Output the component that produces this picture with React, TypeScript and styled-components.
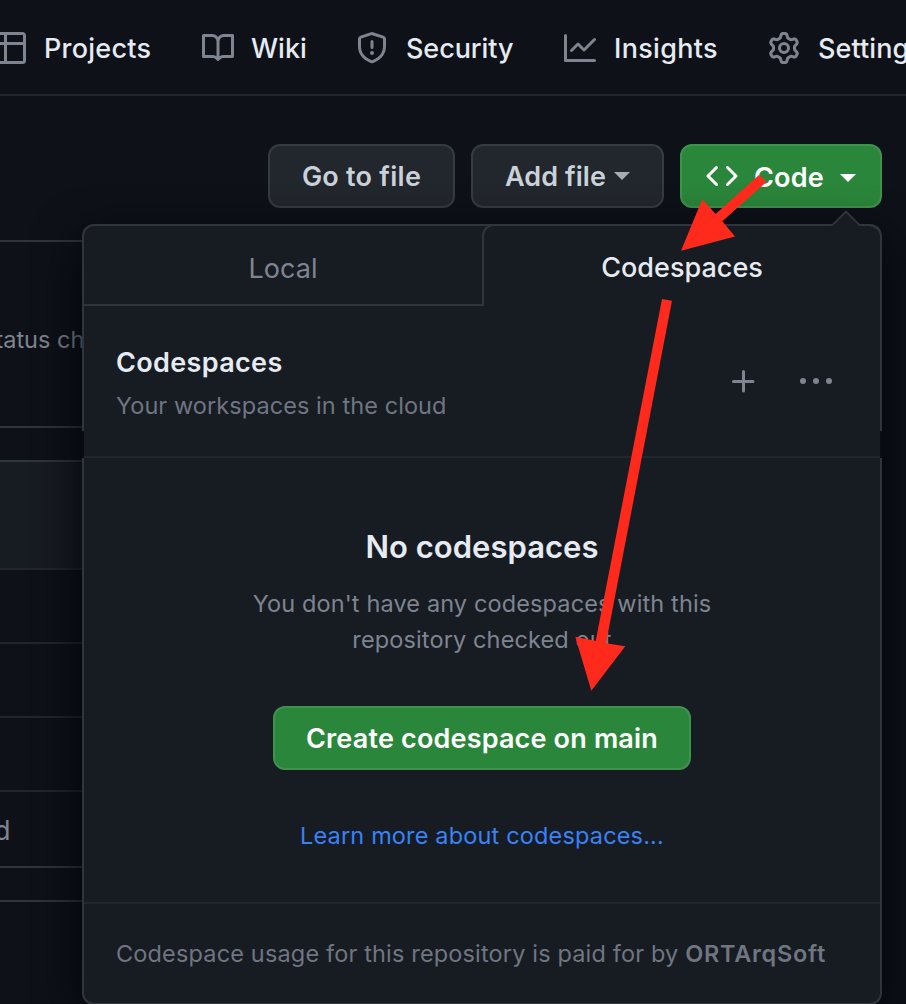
import React from "react";
import styled, { createGlobalStyle } from "styled-components";

const color = {
  canvas: "#0e1118",
  overlay: "#171b22",
  border: "#30353d",
  borderMuted: "#22262d",
  text: "#e6ebf3",
  muted: "#7e8590",
  subtle: "#6f7681",
  green: "#2a863a",
  link: "#3a82f6",
  arrow: "#ff2a1c",
};

const GlobalStyle = createGlobalStyle`
  * { box-sizing: border-box; }
  body {
    margin: 0;
    background: ${color.canvas};
    font-family: Inter, "Liberation Sans", sans-serif;
    color: ${color.text};
  }
`;

const Page = styled.div`
  position: relative;
  width: 906px;
  height: 1004px;
  overflow: hidden;
  background: ${color.canvas};
`;

const Nav = styled.nav`
  display: flex;
  align-items: center;
  gap: 48px;
  height: 96px;
  padding-top: 2px;
  margin-left: -6px;
  border-bottom: 2px solid ${color.borderMuted};
`;

const NavItem = styled.a`
  display: flex;
  flex: none;
  align-items: center;
  gap: 16px;
`;

const NavLabel = styled.span<{ $width: number; $indent: number; $spacing: number }>`
  width: ${(p) => p.$width}px;
  padding-top: 2px;
  padding-left: ${(p) => p.$indent}px;
  font-size: 27px;
  font-weight: 450;
  line-height: 40px;
  letter-spacing: ${(p) => p.$spacing}px;
  white-space: nowrap;
`;

const Octicon = styled.svg<{ $tone?: string }>`
  flex: none;
  display: block;
  fill: ${(p) => p.$tone ?? color.muted};
`;

const Toolbar = styled.div`
  position: relative;
  z-index: 1;
  display: flex;
  justify-content: flex-end;
  gap: 16px;
  padding: 48px 24px 0 0;
`;

const Button = styled.button<{ $width: number; $primary?: boolean; $spacing?: number }>`
  display: flex;
  align-items: center;
  justify-content: center;
  width: ${(p) => p.$width}px;
  height: 64px;
  padding: 0;
  border: 2px solid ${(p) => (p.$primary ? "#3f924e" : "#363b42")};
  border-radius: 12px;
  background: ${(p) => (p.$primary ? color.green : "#22262d")};
  color: ${(p) => (p.$primary ? "#ffffff" : "#c9d1d9")};
  font: 600 27px/40px Inter, "Liberation Sans", sans-serif;
  letter-spacing: ${(p) => p.$spacing ?? 0.2}px;
  white-space: nowrap;
`;

const ButtonLabel = styled.span`
  padding-top: 2px;
`;

const CodeLabel = styled.span`
  margin: 4px 16px 0;
`;

const Caret = styled.span<{ $tone: string }>`
  width: 0;
  height: 0;
  border: 8px solid transparent;
  border-top-color: ${(p) => p.$tone};
  border-bottom-width: 0;
`;

const AddCaret = styled(Caret)`
  margin-left: 8px;
`;

const CodeCaret = styled(Caret)`
  margin-top: 3px;
`;

const Menu = styled.section`
  position: absolute;
  top: 128px;
  right: 24px;
  width: 800px;
  height: 781px;
  border-radius: 12px;
  box-shadow: 0 16px 48px #010409;
`;

const Notch = styled.svg`
  position: absolute;
  top: -14px;
  right: 20px;
`;

const Tabs = styled.div`
  display: flex;
  height: 82px;
  border: 2px solid ${color.border};
  border-bottom: 0;
  border-radius: 12px 12px 0 0;
  background: ${color.overlay};
`;

const Tab = styled.div<{ $active?: boolean }>`
  display: flex;
  align-items: center;
  justify-content: center;
  width: 398px;
  height: ${(p) => (p.$active ? 82 : 80)}px;
  margin-top: ${(p) => (p.$active ? -2 : 0)}px;
  padding-top: ${(p) => (p.$active ? 4 : 8)}px;
  border: 0 solid ${color.border};
  border-width: ${(p) => (p.$active ? "2px 0 0 2px" : "0 0 2px 0")};
  border-top-left-radius: ${(p) => (p.$active ? 12 : 0)}px;
  border-top-right-radius: ${(p) => (p.$active ? 12 : 0)}px;
  color: ${(p) => (p.$active ? color.text : color.muted)};
  font-size: 27px;
  font-weight: ${(p) => (p.$active ? 450 : 400)};
  line-height: 40px;
  letter-spacing: 0.02px;
`;

/* The side borders stop short of the divider, leaving a notch on either edge. */
const ListHeader = styled.header`
  display: flex;
  justify-content: space-between;
  height: 152px;
  padding: 37px 49px 0 34px;
  background:
    linear-gradient(${color.borderMuted}, ${color.borderMuted}) 2px 100% / 796px 2px no-repeat,
    linear-gradient(${color.overlay}, ${color.overlay}) 2px 0 / 796px 100% no-repeat,
    linear-gradient(${color.border}, ${color.border}) 0 0 / 100% 125px no-repeat,
    #0a0c11;
`;

const Heading = styled.h3`
  margin: 0;
  font-size: 27px;
  font-weight: 600;
  line-height: 40px;
  letter-spacing: 0.35px;
`;

const Caption = styled.p`
  margin: 4px 0 0;
  color: ${color.subtle};
  font-size: 23.5px;
  line-height: 37px;
  letter-spacing: 0.07px;
`;

const Actions = styled.div`
  display: flex;
  gap: 44px;
  height: 32px;
  margin-top: 22px;
  align-items: center;
`;

const Blankslate = styled.div`
  display: flex;
  flex-direction: column;
  align-items: center;
  height: 446px;
  padding-top: 65px;
  border: 2px solid ${color.border};
  border-width: 0 2px;
  background:
    linear-gradient(${color.borderMuted}, ${color.borderMuted}) 0 100% / 100% 2px no-repeat,
    ${color.overlay};
`;

const Title = styled.h2`
  margin: 0;
  font-size: 31px;
  font-weight: 600;
  line-height: 48px;
  letter-spacing: 0.02px;
`;

const Message = styled.p`
  width: 480px;
  margin: 15px 0 48px;
  color: ${color.muted};
  font-size: 23.5px;
  line-height: 36px;
  letter-spacing: 0.13px;
  text-align: center;
`;

const Link = styled.a`
  margin-top: 48px;
  color: ${color.link};
  font-size: 23.5px;
  line-height: 36px;
  letter-spacing: 0.16px;
`;

const Footer = styled.footer`
  height: 101px;
  padding: 32px 0 0 32px;
  border: 2px solid ${color.border};
  border-top: 0;
  border-radius: 0 0 12px 12px;
  background: ${color.overlay};
  color: ${color.subtle};
  font-size: 23.5px;
  line-height: 36px;
  letter-spacing: 0.156px;
  white-space: nowrap;
`;

const Owner = styled.strong`
  font-weight: 600;
  letter-spacing: 0.72px;
`;

const Content = styled.main`
  display: flex;
  flex-direction: column;
  gap: 32px;
  width: 882px;
  margin-top: 32px;
`;

const Box = styled.div<{ $height: number }>`
  flex: none;
  height: ${(p) => p.$height}px;
  border: 2px solid ${color.border};
  border-width: 2px 0;
`;

const StatusText = styled.p`
  margin: 80px 0 0 -17px;
  color: ${color.muted};
  font-size: 23.5px;
  line-height: 36px;
`;

const FileRow = styled.div<{ $head?: boolean; $last?: boolean }>`
  display: flex;
  align-items: center;
  height: ${(p) => (p.$head ? 108 : 74)}px;
  padding-top: 4px;
  border-bottom: ${(p) => (p.$last ? 0 : 2)}px solid ${color.borderMuted};
  background: ${(p) => (p.$head ? color.overlay : "transparent")};
`;

const FileText = styled.span`
  margin-left: -6px;
  color: ${color.muted};
  font-size: 27px;
  line-height: 40px;
`;

const Annotations = styled.svg`
  position: absolute;
  inset: 0;
  z-index: 2;
  fill: ${color.arrow};
`;

const icons = {
  table:
    "M0 1.75C0 .784.784 0 1.75 0h12.5C15.216 0 16 .784 16 1.75v12.5A1.75 1.75 0 0 1 14.25 16H1.75A1.75 1.75 0 0 1 0 14.25ZM6.5 6.5v8h7.75a.25.25 0 0 0 .25-.25V6.5Zm8-1.5V1.75a.25.25 0 0 0-.25-.25H6.5V5Zm-13 1.5v7.75c0 .138.112.25.25.25H5v-8ZM5 5V1.5H1.75a.25.25 0 0 0-.25.25V5Z",
  book: "M0 1.75A.75.75 0 0 1 .75 1h4.253c1.227 0 2.317.59 3 1.501A3.743 3.743 0 0 1 11.006 1h4.245a.75.75 0 0 1 .75.75v10.5a.75.75 0 0 1-.75.75h-4.507a2.25 2.25 0 0 0-1.591.659l-.622.621a.75.75 0 0 1-1.06 0l-.622-.621A2.25 2.25 0 0 0 5.258 13H.75a.75.75 0 0 1-.75-.75Zm7.251 10.324.004-5.073-.002-2.253A2.25 2.25 0 0 0 5.003 2.5H1.5v9h3.757a3.75 3.75 0 0 1 1.994.574ZM8.755 4.75l-.004 7.322a3.752 3.752 0 0 1 1.992-.572H14.5v-9h-3.495a2.25 2.25 0 0 0-2.25 2.25Z",
  shield:
    "M7.467.133a1.748 1.748 0 0 1 1.066 0l5.25 1.68A1.75 1.75 0 0 1 15 3.48V7c0 1.566-.32 3.182-1.303 4.682-.983 1.498-2.585 2.813-5.032 3.855a1.697 1.697 0 0 1-1.33 0c-2.447-1.042-4.049-2.357-5.032-3.855C1.32 10.182 1 8.566 1 7V3.48a1.75 1.75 0 0 1 1.217-1.667Zm.61 1.429a.25.25 0 0 0-.153 0l-5.25 1.68a.25.25 0 0 0-.174.238V7c0 1.358.275 2.666 1.057 3.86.784 1.194 2.121 2.34 4.366 3.297a.196.196 0 0 0 .154 0c2.245-.956 3.582-2.104 4.366-3.298C13.225 9.666 13.5 8.36 13.5 7V3.48a.251.251 0 0 0-.174-.237l-5.25-1.68ZM8.75 4.75v3a.75.75 0 0 1-1.5 0v-3a.75.75 0 0 1 1.5 0ZM9 10.5a1 1 0 1 1-2 0 1 1 0 0 1 2 0Z",
  graph:
    "M1.5 1.75V13.5h13.75a.75.75 0 0 1 0 1.5H.75a.75.75 0 0 1-.75-.75V1.75a.75.75 0 0 1 1.5 0Zm14.28 2.53-5.25 5.25a.75.75 0 0 1-1.06 0L7 7.06 4.28 9.78a.751.751 0 0 1-1.042-.018.751.751 0 0 1-.018-1.042l3.25-3.25a.75.75 0 0 1 1.06 0L10 7.94l4.72-4.72a.751.751 0 0 1 1.042.018.751.751 0 0 1 .018 1.042Z",
  gear: "M8 0a8.2 8.2 0 0 1 .701.031C9.444.095 9.99.645 10.16 1.29l.288 1.107c.018.066.079.158.212.224.231.114.454.243.668.386.123.082.233.09.299.071l1.103-.303c.644-.176 1.392.021 1.82.63.27.385.506.792.704 1.218.315.675.111 1.422-.364 1.891l-.814.806c-.049.048-.098.147-.088.294.016.257.016.515 0 .772-.01.147.038.246.088.294l.814.806c.475.469.679 1.216.364 1.891a7.977 7.977 0 0 1-.704 1.217c-.428.61-1.176.807-1.82.63l-1.102-.302c-.067-.019-.177-.011-.3.071a5.909 5.909 0 0 1-.668.386c-.133.066-.194.158-.211.224l-.29 1.106c-.168.646-.715 1.196-1.458 1.26a8.006 8.006 0 0 1-1.402 0c-.743-.064-1.289-.614-1.458-1.26l-.289-1.106c-.018-.066-.079-.158-.212-.224a5.738 5.738 0 0 1-.668-.386c-.123-.082-.233-.09-.299-.071l-1.103.303c-.644.176-1.392-.021-1.82-.63a8.12 8.12 0 0 1-.704-1.218c-.315-.675-.111-1.422.363-1.891l.815-.806c.05-.048.098-.147.088-.294a6.214 6.214 0 0 1 0-.772c.01-.147-.038-.246-.088-.294l-.815-.806C.635 6.045.431 5.298.746 4.623a7.92 7.92 0 0 1 .704-1.217c.428-.61 1.176-.807 1.82-.63l1.102.302c.067.019.177.011.3-.071.214-.143.437-.272.668-.386.133-.066.194-.158.211-.224l.29-1.106C6.009.645 6.556.095 7.299.03 7.53.01 7.764 0 8 0Zm-.571 1.525c-.036.003-.108.036-.137.146l-.289 1.105c-.147.561-.549.967-.998 1.189-.173.086-.34.183-.5.29-.417.278-.97.423-1.529.27l-1.103-.303c-.109-.03-.175.016-.195.045-.22.312-.412.644-.573.99-.014.031-.021.11.059.19l.815.806c.411.406.562.957.53 1.456a4.709 4.709 0 0 0 0 .582c.032.499-.119 1.05-.53 1.456l-.815.806c-.081.08-.073.159-.059.19.162.346.353.677.573.989.02.03.085.076.195.046l1.102-.303c.56-.153 1.113-.008 1.53.27.161.107.328.204.501.29.447.222.85.629.997 1.189l.289 1.105c.029.109.101.143.137.146a6.6 6.6 0 0 0 1.142 0c.036-.003.108-.036.137-.146l.289-1.105c.147-.561.549-.967.998-1.189.173-.086.34-.183.5-.29.417-.278.97-.423 1.529-.27l1.103.303c.109.029.175-.016.195-.045.22-.313.411-.644.573-.99.014-.031.021-.11-.059-.19l-.815-.806c-.411-.406-.562-.957-.53-1.456a4.709 4.709 0 0 0 0-.582c-.032-.499.119-1.05.53-1.456l.815-.806c.081-.08.073-.159.059-.19a6.464 6.464 0 0 0-.573-.989c-.02-.03-.085-.076-.195-.046l-1.102.303c-.56.153-1.113.008-1.53-.27a4.44 4.44 0 0 0-.501-.29c-.447-.222-.85-.629-.997-1.189l-.289-1.105c-.029-.11-.101-.143-.137-.146a6.6 6.6 0 0 0-1.142 0ZM11 8a3 3 0 1 1-6 0 3 3 0 0 1 6 0ZM9.5 8a1.5 1.5 0 1 0-3.001.001A1.5 1.5 0 0 0 9.5 8Z",
  code: "m11.28 3.22 4.25 4.25a.75.75 0 0 1 0 1.06l-4.25 4.25a.749.749 0 0 1-1.275-.326.749.749 0 0 1 .215-.734L13.94 8l-3.72-3.72a.749.749 0 0 1 .326-1.275.749.749 0 0 1 .734.215Zm-6.56 0a.751.751 0 0 1 1.042.018.751.751 0 0 1 .018 1.042L2.06 8l3.72 3.72a.749.749 0 0 1-.326 1.275.749.749 0 0 1-.734-.215L.47 8.53a.75.75 0 0 1 0-1.06Z",
};

function Icon({ name, tone }: { name: keyof typeof icons; tone?: string }) {
  return (
    <Octicon $tone={tone} width="32" height="32" viewBox="0 0 16 16">
      <path d={icons[name]} />
    </Octicon>
  );
}

const navItems: { icon: keyof typeof icons; label: string; width: number; indent: number; spacing: number }[] = [
  { icon: "table", label: "Projects", width: 112, indent: 2, spacing: 0.25 },
  { icon: "book", label: "Wiki", width: 58, indent: 1, spacing: 0 },
  { icon: "shield", label: "Security", width: 112, indent: 2, spacing: -0.08 },
  { icon: "graph", label: "Insights", width: 108, indent: 2, spacing: 0.3 },
  { icon: "gear", label: "Settings", width: 112, indent: 2, spacing: 0.1 },
];

export default function App() {
  return (
    <Page>
      <GlobalStyle />
      <Nav>
        {navItems.map((item) => (
          <NavItem key={item.label}>
            <Icon name={item.icon} />
            <NavLabel $width={item.width} $indent={item.indent} $spacing={item.spacing}>
              {item.label}
            </NavLabel>
          </NavItem>
        ))}
      </Nav>

      <Toolbar>
        <Button $width={187} $spacing={0.25}>
          <ButtonLabel>Go to file</ButtonLabel>
        </Button>
        <Button $width={193} $spacing={0.05}>
          <ButtonLabel>Add file</ButtonLabel>
          <AddCaret $tone="#a5acb4" />
        </Button>
        <Button $width={202} $primary $spacing={0.2}>
          <Icon name="code" tone="#ffffff" />
          <CodeLabel>Code</CodeLabel>
          <CodeCaret $tone="#ffffff" />
        </Button>

        <Menu>
          <Tabs>
            <Tab>Local</Tab>
            <Tab $active>Codespaces</Tab>
          </Tabs>
          <Notch width="32" height="16" viewBox="0 0 32 16">
            <path d="M2 16 16 2 30 16Z" fill={color.overlay} />
            <path d="M1.5 16 16 1.5 30.5 16" fill="none" stroke={color.border} strokeWidth="1.8" />
          </Notch>
          <ListHeader>
            <div>
              <Heading>Codespaces</Heading>
              <Caption>Your workspaces in the cloud</Caption>
            </div>
            <Actions>
              <Octicon width="24" height="24" viewBox="0 0 24 24">
                <path
                  d="M12.5 2.5V22M2.5 12.5H22"
                  fill="none"
                  stroke={color.muted}
                  strokeWidth="3"
                  strokeLinecap="round"
                />
              </Octicon>
              <Octicon width="34" height="24" viewBox="0 0 34 24">
                <circle cx="4" cy="12" r="3" />
                <circle cx="17" cy="12" r="3" />
                <circle cx="30" cy="12" r="3" />
              </Octicon>
            </Actions>
          </ListHeader>
          <Blankslate>
            <Title>No codespaces</Title>
            <Message>
              You don't have any codespaces with this
              <br />
              repository checked out
            </Message>
            <Button $width={418} $primary $spacing={0.17}>
              <ButtonLabel>Create codespace on main</ButtonLabel>
            </Button>
            <Link>Learn more about codespaces...</Link>
          </Blankslate>
          <Footer>
            Codespace usage for this repository is paid for by <Owner>ORTArqSoft</Owner>
          </Footer>
        </Menu>
      </Toolbar>

      <Content>
        <Box $height={188}>
          <StatusText>status checks</StatusText>
        </Box>
        <Box $height={408}>
          <FileRow $head />
          <FileRow />
          <FileRow />
          <FileRow />
          <FileRow $last>
            <FileText>d</FileText>
          </FileRow>
        </Box>
        <Box $height={188} />
      </Content>

      <Annotations width="906" height="1004" viewBox="0 0 906 1004">
        <polygon points="759,175 766.7,181.7 722.3,221.3 735,236.5 681,250.8 702.3,199.3 715.7,214" />
        <polygon points="662,299 672,300.8 606,643.3 625.3,646.3 591.3,690.8 575.3,636.7 595.7,641" />
      </Annotations>
    </Page>
  );
}
